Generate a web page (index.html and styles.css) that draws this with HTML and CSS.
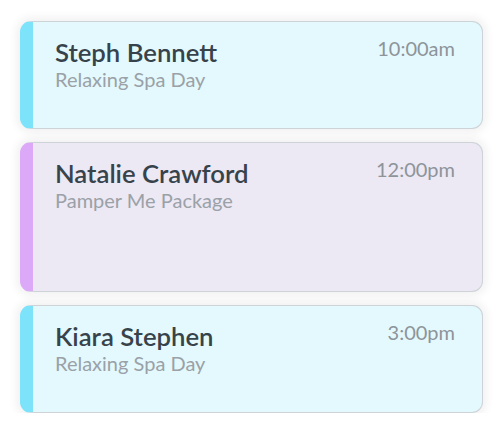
FILE: index.html
```html
<!DOCTYPE html>
<html>
<head>
<meta charset="utf-8">
<link rel="stylesheet" href="styles.css">
</head>
<body>
<div class="list">
  <div class="card cyan">
    <div class="info">
      <div class="name">Steph Bennett</div>
      <div class="service">Relaxing Spa Day</div>
    </div>
    <div class="time">10:00am</div>
  </div>
  <div class="card purple tall">
    <div class="info">
      <div class="name">Natalie Crawford</div>
      <div class="service">Pamper Me Package</div>
    </div>
    <div class="time">12:00pm</div>
  </div>
  <div class="card cyan">
    <div class="info">
      <div class="name">Kiara Stephen</div>
      <div class="service">Relaxing Spa Day</div>
    </div>
    <div class="time">3:00pm</div>
  </div>
</div>
</body>
</html>
```
FILE: styles.css
```css
html, body {
  margin: 0;
  padding: 0;
  background: #ffffff;
}
body {
  font-family: Lato, "Open Sans", sans-serif;
}
.list {
  display: flex;
  flex-direction: column;
  gap: 13px;
  padding: 21px 21px 0 20px;
}
.card {
  display: flex;
  justify-content: space-between;
  align-items: flex-start;
  height: 108px;
  box-sizing: border-box;
  border: 1px solid #cdd3d7;
  border-left: 13px solid #7de3fb;
  border-radius: 11px;
  padding: 15px 27px 0 22px;
  box-shadow: 0 0 9px 4px rgba(0, 0, 0, 0.055);
}
.cyan {
  background: #e4f9fe;
  border-left-color: #7de3fb;
}
.purple {
  background: #ece8f4;
  border-left-color: #dba9f8;
}
.tall {
  height: 150px;
}
.name {
  font-size: 25.7px;
  font-weight: 600;
  color: #37434b;
  line-height: 30px;
}
.service {
  font-size: 20px;
  color: #9aa1a7;
  line-height: 24px;
}
.time {
  font-size: 20px;
  color: #8d949a;
  line-height: 22px;
}
```
